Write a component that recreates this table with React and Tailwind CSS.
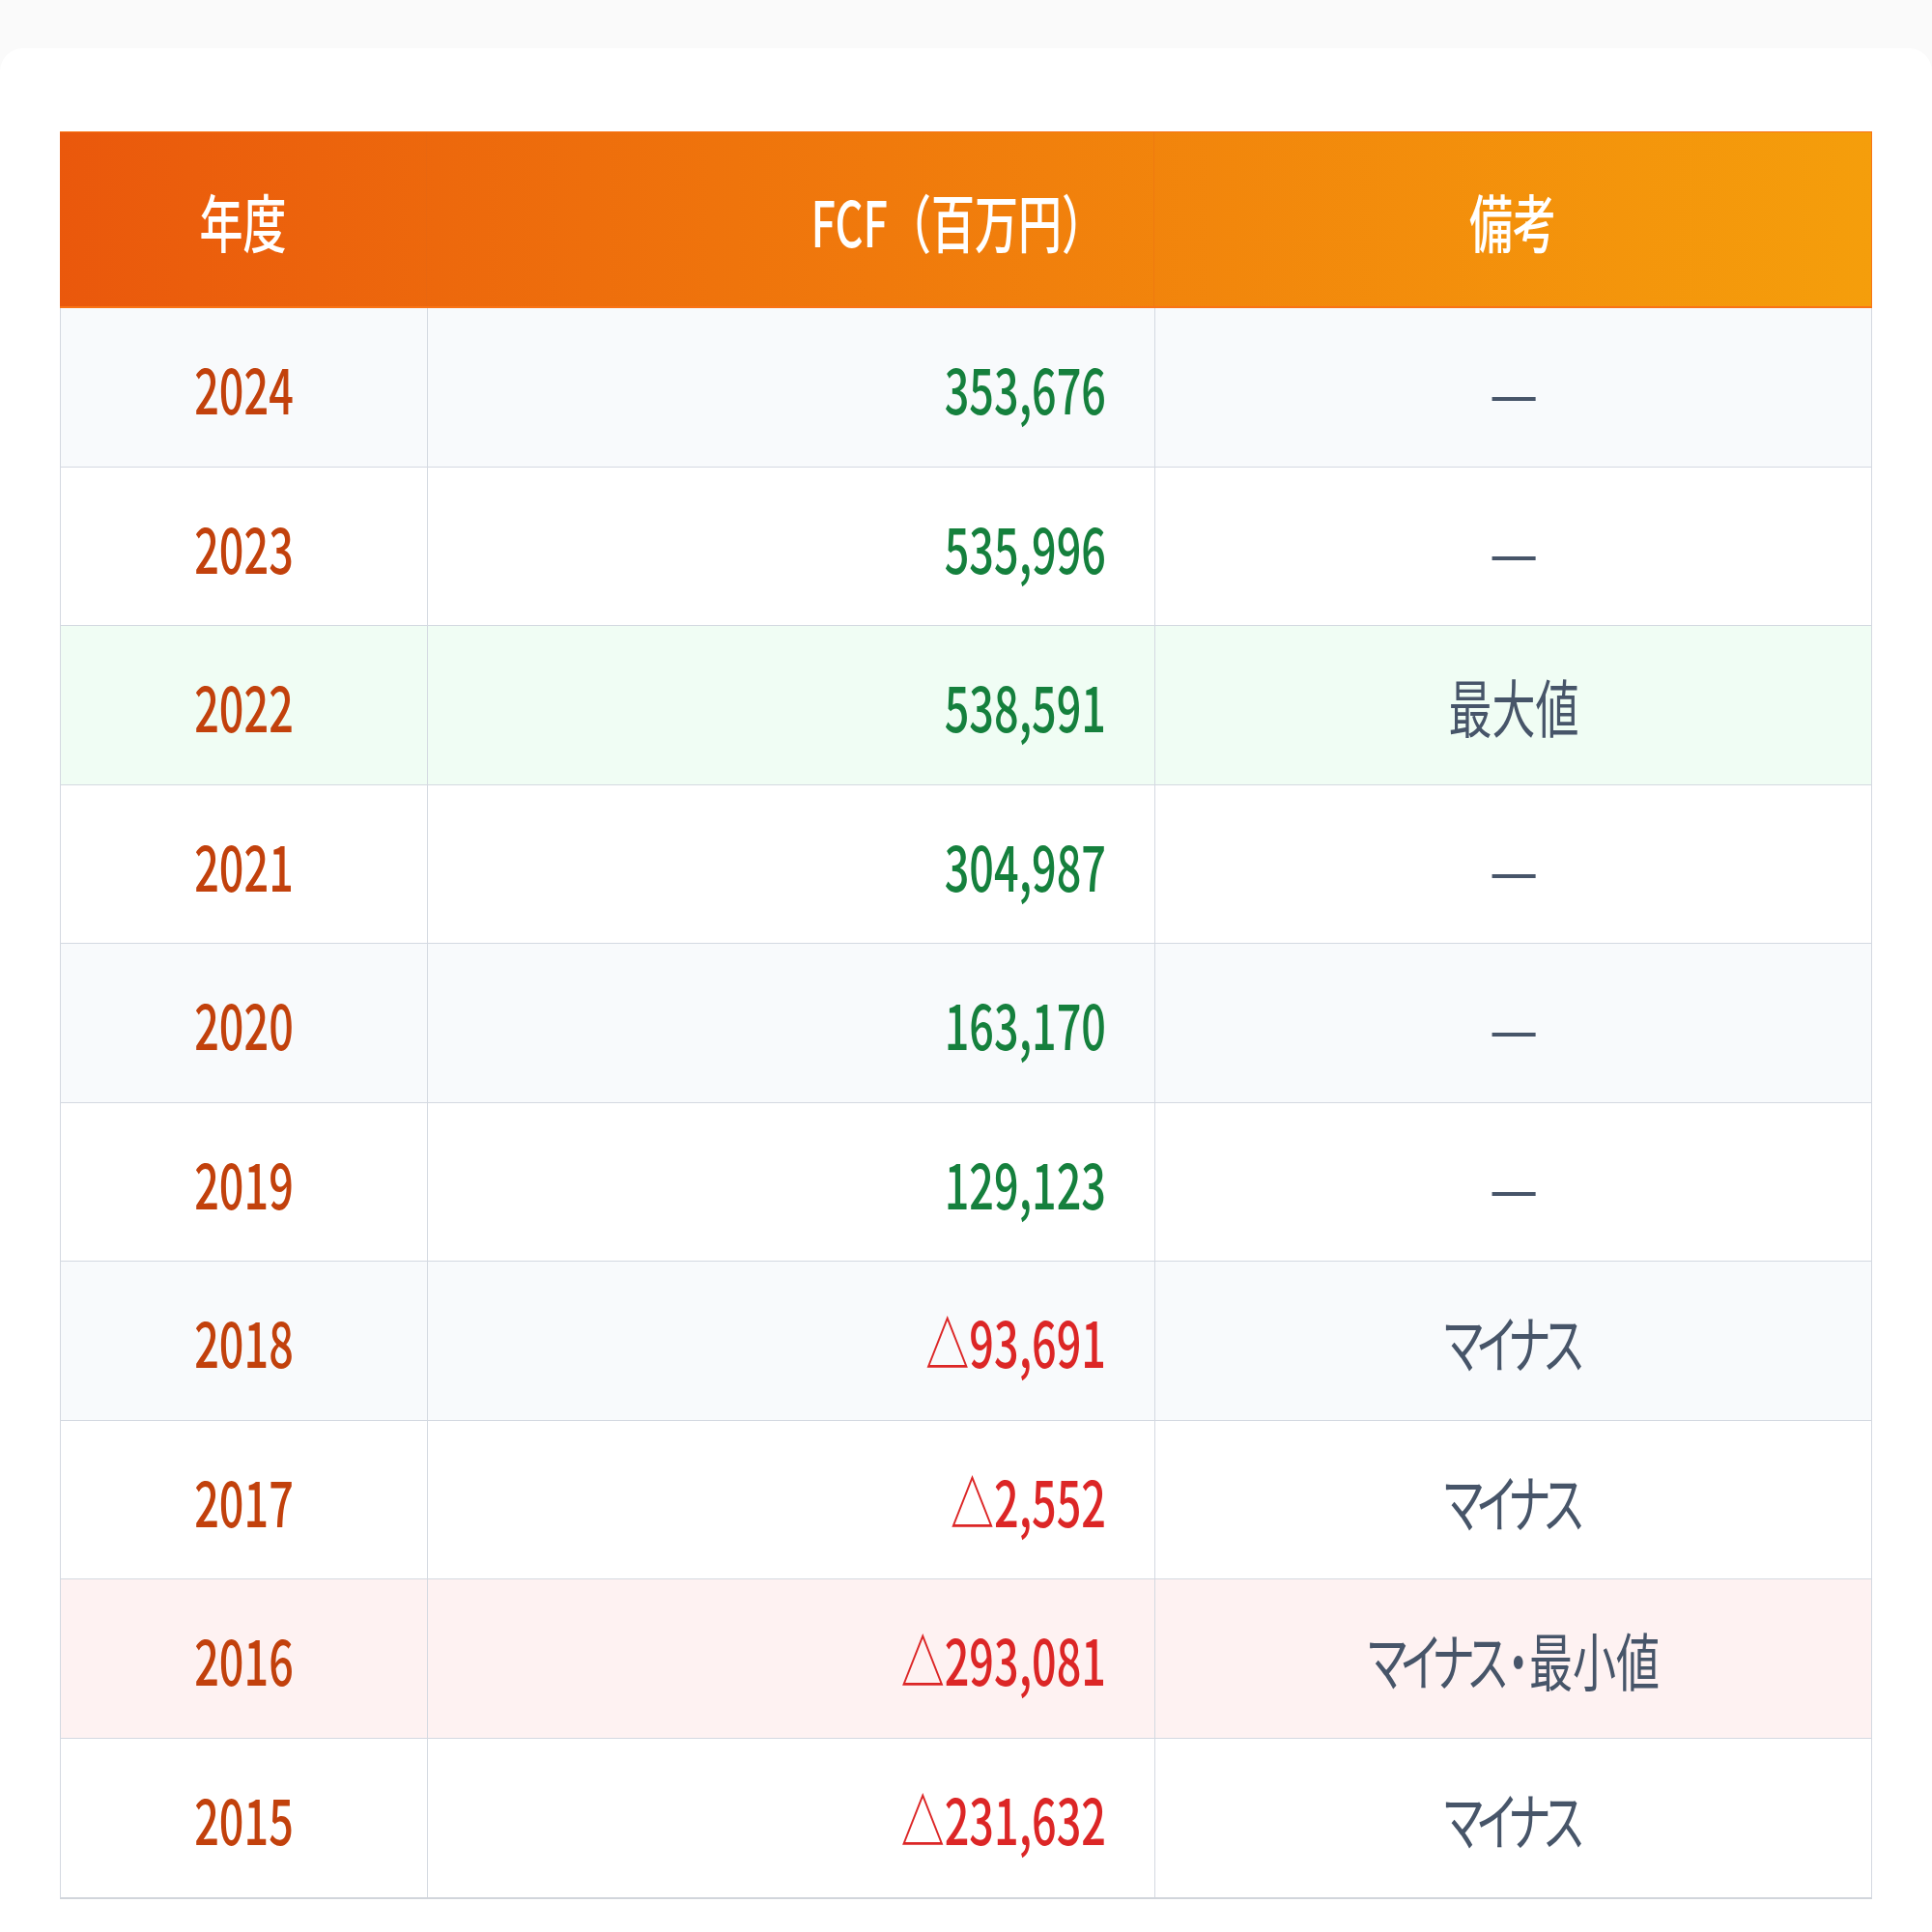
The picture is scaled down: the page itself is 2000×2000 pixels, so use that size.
import React from 'react'

const rows = [
  { year: '2024', fcf: '353,676', note: '—' },
  { year: '2023', fcf: '535,996', note: '—' },
  { year: '2022', fcf: '538,591', note: '最大値', tone: 'max' },
  { year: '2021', fcf: '304,987', note: '—' },
  { year: '2020', fcf: '163,170', note: '—' },
  { year: '2019', fcf: '129,123', note: '—' },
  { year: '2018', fcf: '△93,691', note: 'マイナス', neg: true },
  { year: '2017', fcf: '△2,552', note: 'マイナス', neg: true },
  { year: '2016', fcf: '△293,081', note: 'マイナス・最小値', neg: true, tone: 'min' },
  { year: '2015', fcf: '△231,632', note: 'マイナス', neg: true },
]

// the picture is stretched vertically, so text is scaled on y
const Txt = ({ children, className = '' }) => (
  <span className={`inline-block scale-y-[1.45] leading-none ${className}`}>{children}</span>
)

const rowBg = (row, i) => {
  if (row.tone === 'max') return 'bg-[#f0fdf4]'
  if (row.tone === 'min') return 'bg-[#fef2f2]'
  return i % 2 === 0 ? 'bg-[#f8fafc]' : 'bg-white'
}

// katakana runs are set tighter than kanji
const Note = ({ text }) => {
  if (text === '—') {
    return <Txt className="scale-x-[1.25] translate-y-[2px]">—</Txt>
  }
  const parts = text.split(/([ァ-ヶー]+)/).filter(Boolean)
  return (
    <Txt className="[font-feature-settings:'palt']">
      {parts.map((p, i) =>
        /^[ァ-ヶー]+$/.test(p) ? (
          <span key={i} className="tracking-[-6px] mr-[6px]">
            {p}
          </span>
        ) : (
          <span key={i}>{p}</span>
        )
      )}
    </Txt>
  )
}

const App = () => {
  return (
    <div className="min-h-screen bg-[#fafafa] pt-[50px] font-['Noto_Sans_CJK_JP','Noto_Sans',sans-serif]">
      <div className="bg-white rounded-t-[24px] px-[62px] pt-[86px] pb-[36px] min-h-[1950px]">
        {/* Header */}
        <div className="grid grid-cols-[379px_753px_743px] h-[183px] bg-linear-to-r from-[#ea580c] to-[#f59e0b] border-t border-r border-b-2 border-[#f97316] text-white text-[45px] font-medium">
          <div className="flex items-center justify-center">
            <Txt>年度</Txt>
          </div>
          <div className="flex items-center justify-end pr-[50px] border-l border-[#e9670f]">
            <Txt>FCF（百万円）</Txt>
          </div>
          <div className="flex items-center justify-center border-l border-[#ef7a10]">
            <Txt>備考</Txt>
          </div>
        </div>

        {/* Body */}
        <div className="border-x border-[#d4d9e1] border-b-2 border-b-[#d1d5db]">
          {rows.map((row, i) => (
            <div
              key={row.year}
              className={`grid grid-cols-[379px_753px_743px] h-[164.5px] text-[45px] ${rowBg(row, i)} ${
                i < rows.length - 1 ? 'border-b border-[#d4d9e1]' : ''
              }`}
            >
              <div className="flex items-center justify-center text-[#c2410c] font-medium">
                <Txt>{row.year}</Txt>
              </div>
              <div
                className={`flex items-center justify-end pr-[50px] border-l border-[#d4d9e1] font-medium ${
                  row.neg ? 'text-[#dc2626]' : 'text-[#15803d]'
                }`}
              >
                <Txt>{row.fcf}</Txt>
              </div>
              <div className="flex items-center justify-center border-l border-[#d4d9e1] text-[#475569]">
                <Note text={row.note} />
              </div>
            </div>
          ))}
        </div>
      </div>
    </div>
  )
}

export default App
